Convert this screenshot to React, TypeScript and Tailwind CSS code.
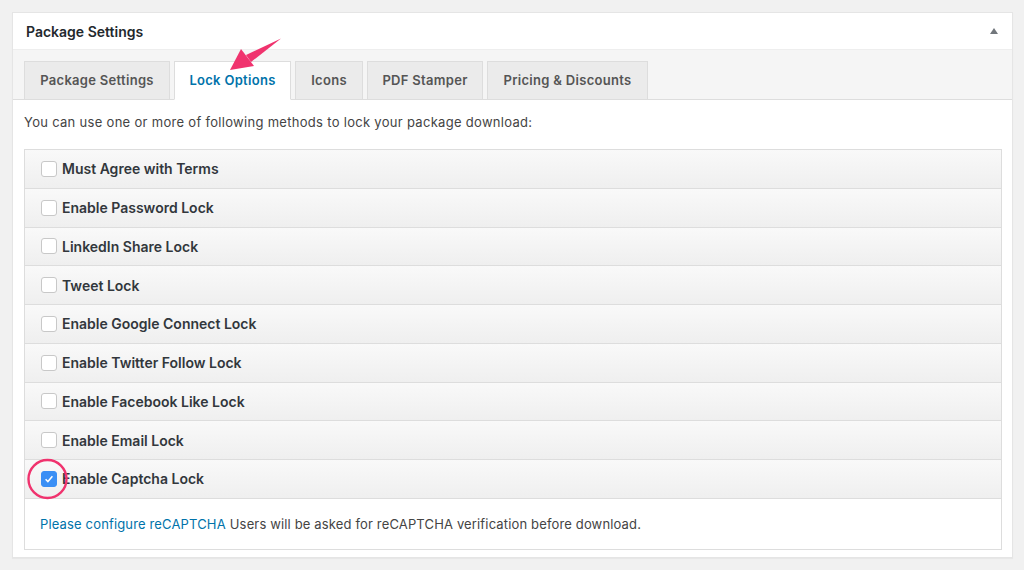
import { useState } from 'react';

const locks = [
  'Must Agree with Terms',
  'Enable Password Lock',
  'LinkedIn Share Lock',
  'Tweet Lock',
  'Enable Google Connect Lock',
  'Enable Twitter Follow Lock',
  'Enable Facebook Like Lock',
  'Enable Email Lock',
  'Enable Captcha Lock',
];

const tabs = [
  { label: 'Package Settings', w: 'w-[146px]' },
  { label: 'Lock Options', w: 'w-[117px]' },
  { label: 'Icons', w: 'w-[68px]' },
  { label: 'PDF Stamper', w: 'w-[116px]' },
  { label: 'Pricing & Discounts', w: 'w-[161px]' },
];

export default function App() {
  const [checked, setChecked] = useState<Record<string, boolean>>({ 'Enable Captcha Lock': true });
  const active = 'Lock Options';

  return (
    <div
      className="relative w-[1024px] h-[570px] bg-[#f1f1f1] pt-[12px] pl-[12px] pr-[11px] overflow-hidden text-[#444]"
      style={{ fontFamily: 'Inter, "Liberation Sans", Arial, sans-serif' }}
    >
      <div className="border border-[#e5e5e5] bg-white shadow-[0_1px_1px_rgba(0,0,0,0.04)]">
        {/* header */}
        <div className="h-[37px] flex items-center justify-between pl-[13px] pr-[14px] border-b border-[#eee]">
          <h2 className="text-[14px] font-semibold text-[#23282d]">Package Settings</h2>
          <span className="w-0 h-0 border-l-[4px] border-r-[4px] border-b-[6px] border-l-transparent border-r-transparent border-b-[#72777c]" />
        </div>

        {/* tabs */}
        <div className="bg-[#f5f5f5] pt-[11px] px-[11px] flex gap-[4px] border-b border-[#ddd]">
          {tabs.map((t) => (
            <div
              key={t.label}
              className={
                t.label === active
                  ? `${t.w} h-[39px] -mb-px flex items-center justify-center bg-white border border-[#ddd] border-b-white text-[13px] font-semibold text-[#0073aa] tracking-[0.3px]`
                  : `${t.w} h-[39px] -mb-px flex items-center justify-center bg-[#ebebeb] border border-[#ddd] text-[13px] font-semibold text-[#555] tracking-[0.3px]`
              }
            >
              {t.label}
            </div>
          ))}
        </div>

        {/* body */}
        <div className="pl-[11px] pr-[10px] pt-[13px] pb-[7px]">
          <p className="text-[13px] text-[#444] leading-[18px] tracking-[0.3px]">
            You can use one or more of following methods to lock your package download:
          </p>
          <div className="mt-[18px] border border-[#ddd]">
            {locks.map((l) => (
              <label
                key={l}
                className="h-[38.75px] flex items-center pl-[16px] border-b border-[#ddd] bg-gradient-to-b from-[#f9f9f9] to-[#efefef] cursor-pointer"
              >
                <span
                  className={
                    checked[l]
                      ? 'w-[16px] h-[16px] rounded-[3px] bg-[#3a8ff5] border border-[#3a8ff5] flex items-center justify-center'
                      : 'w-[16px] h-[16px] rounded-[3px] bg-white border border-[#c8c8c8] flex items-center justify-center'
                  }
                >
                  {checked[l] && (
                    <svg width="10" height="10" viewBox="0 0 10 10">
                      <path d="M1.6 5.3 L3.9 7.6 L8.4 2.2" stroke="white" strokeWidth="1.5" fill="none" />
                    </svg>
                  )}
                </span>
                <input
                  type="checkbox"
                  className="hidden"
                  checked={!!checked[l]}
                  onChange={(e) => setChecked({ ...checked, [l]: e.target.checked })}
                />
                <span className="ml-[5px] text-[14px] font-semibold text-[#32373c]">{l}</span>
              </label>
            ))}
            <div className="h-[50px] flex items-center pl-[15px] text-[13px] pt-[1px] tracking-[0.15px]">
              <a className="text-[#0073aa]" href="#">Please configure reCAPTCHA</a>
              <span className="ml-[4px]">Users will be asked for reCAPTCHA verification before download.</span>
            </div>
          </div>
        </div>
      </div>

      {/* annotations */}
      <svg className="absolute left-0 top-0 pointer-events-none" width="1024" height="570">
        <path d="M281 38.5 L246 55 L251 62 Z" fill="#f0336e" />
        <path d="M230 70 L241 49 L254 66 Z" fill="#f0336e" />
        <circle cx="47.5" cy="479" r="19" stroke="#f0336e" strokeWidth="2.4" fill="none" />
      </svg>
    </div>
  );
}
